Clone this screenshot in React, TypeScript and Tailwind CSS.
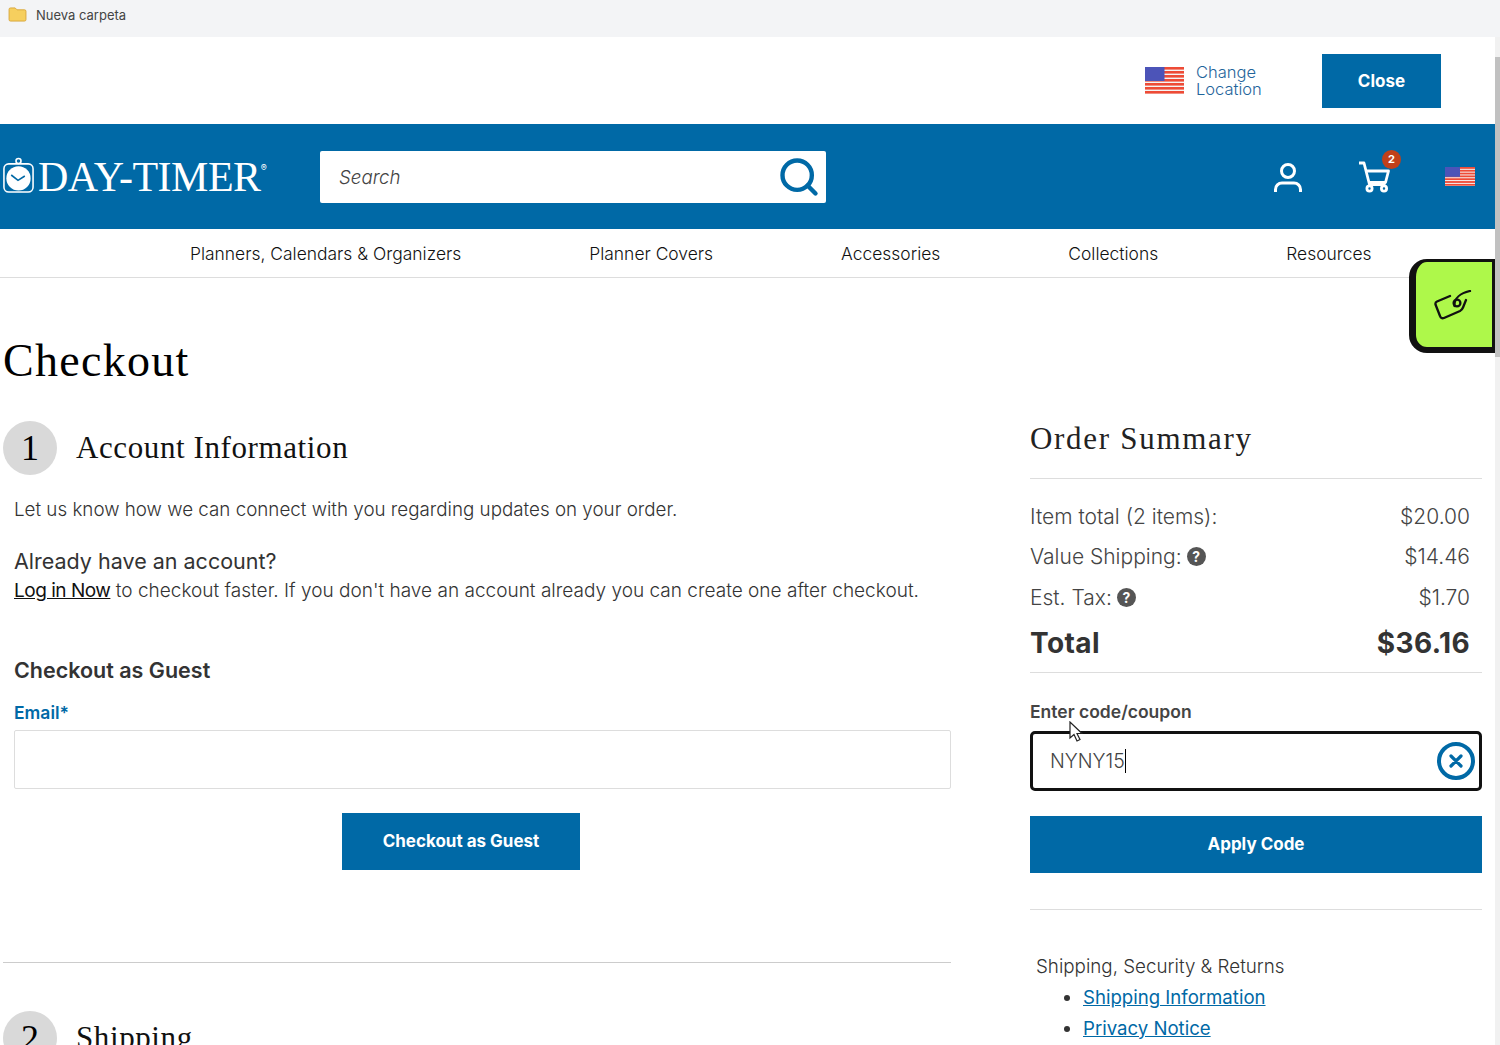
import React from 'react';
import { Search } from 'lucide-react';

const sans = 'font-["Inter",sans-serif]';
const serif = 'font-["Liberation_Serif",serif]';

const Flag = ({ className }: { className: string }) => (
  <svg viewBox="0 0 40 27" className={className} preserveAspectRatio="none">
    <rect width="40" height="27" fill="#f4f4f4" />
    {[0, 4, 8, 12, 16, 20, 24].map((y) => (
      <rect key={y} y={y} width="40" height="2.6" fill="#ee4b36" />
    ))}
    <rect width="20" height="14" fill="#4c54b8" />
  </svg>
);

const Logo = () => (
  <div className="flex items-center">
    <svg viewBox="0 0 34 38" className="w-[33px] h-[37px] ml-[2px] -mt-[2px]">
      <circle cx="17" cy="4" r="2.6" fill="none" stroke="#fff" strokeWidth="1.6" />
      <rect x="2" y="7" width="30" height="29" rx="5" fill="none" stroke="#fff" strokeWidth="1.6" />
      <circle cx="17" cy="22" r="12.5" fill="#fff" />
      <path d="M9.5 18.5 L16.5 24 L23.5 19.5" fill="none" stroke="#0069a6" strokeWidth="1.7" />
    </svg>
    <span className={`${serif} text-[42px] leading-none text-white ml-[3px] tracking-[-0.5px]`}>DAY-TIMER</span>
    <span className="text-white text-[9px] mb-[18px]">®</span>
  </div>
);

const navItems = ['Planners, Calendars & Organizers', 'Planner Covers', 'Accessories', 'Collections', 'Resources'];

const StepTitle = ({ n, title }: { n: number; title: string }) => (
  <div className="flex items-center gap-[19px]">
    <div className={`${serif} w-[54px] h-[54px] rounded-full bg-[#d9d9d9] flex items-center justify-center text-[36px] text-black`}>{n}</div>
    <h2 className={`${serif} text-[31px] tracking-[0.6px] text-[#111]`}>{title}</h2>
  </div>
);

const SummaryRow = ({ label, value, help }: { label: string; value: string; help?: boolean }) => (
  <div className="flex justify-between items-center h-[40.5px] pb-[2px] text-[21px] font-light text-[#444]">
    <span className="flex items-center gap-[5px]">
      {label}
      {help && <span className="w-[19px] h-[19px] rounded-full bg-[#555] text-white text-[14px] font-bold flex items-center justify-center">?</span>}
    </span>
    <span className="mr-[12px]">{value}</span>
  </div>
);

export default function App() {
  return (
    <div className={`${sans} relative w-[1500px] h-[1045px] overflow-hidden bg-white flex flex-col`}>
      <div className="h-[37px] bg-[#f3f4f6] flex items-start pt-[7px] pl-[8px] gap-[9px] shrink-0">
        <svg viewBox="0 0 20 16" className="w-[19px] h-[15px]">
          <path d="M1 2.5 a1.5 1.5 0 0 1 1.5-1.5 h5 l2 2 h8 a1.5 1.5 0 0 1 1.5 1.5 v9 a1.5 1.5 0 0 1-1.5 1.5 h-15 a1.5 1.5 0 0 1-1.5-1.5 z" fill="#f6cf5e" stroke="#d9a63a" />
        </svg>
        <span className="text-[13px] leading-[16px] text-[#444]">Nueva carpeta</span>
      </div>

      <div className="flex flex-1 min-h-0">
        <div className="w-[1495px] shrink-0">
          <div className="h-[87px] flex items-center justify-end pr-[54px]">
            <Flag className="w-[39px] h-[27px]" />
            <div className="ml-[12px] text-[16.5px] leading-[17px] font-light text-[#1f659b] w-[126px]">Change<br />Location</div>
            <button className="w-[119px] h-[54px] pt-[2px] bg-[#0069a6] text-white text-[17px] font-bold">Close</button>
          </div>

          <header className="h-[105px] bg-[#0069a6] flex items-center">
            <div className="w-[320px]"><Logo /></div>
            <div className="w-[506px] h-[52px] bg-white rounded-[2px] flex items-center justify-between pl-[19px] pr-[5px]">
              <span className="italic font-light text-[#444] text-[18.7px] pt-[3px]">Search</span>
              <Search className="w-[44px] h-[44px] text-[#0069a6]" strokeWidth={2.4} />
            </div>
            <div className="flex-1 flex items-center pl-[448px]">
              <svg viewBox="0 0 30 32" className="w-[30px] h-[32px] -ml-[1px]" fill="none" stroke="#fff" strokeWidth="3">
                <circle cx="15" cy="10" r="6.5" />
                <path d="M2.5 31 v-2.5 a6.5 6.5 0 0 1 6.5-6.5 h12 a6.5 6.5 0 0 1 6.5 6.5 v2.5" />
              </svg>
              <div className="relative ml-[55px]">
                <svg viewBox="0 0 32 32" className="block w-[32px] h-[32px]" fill="none" stroke="#fff" strokeWidth="2.8" strokeLinejoin="round">
                  <path d="M1 2 h5 l5.5 21.5 h16" />
                  <path d="M7.5 10 h23 l-3 11.5 h-16" />
                  <circle cx="11.5" cy="27.5" r="2.6" />
                  <circle cx="26" cy="27.5" r="2.6" />
                </svg>
                <span className="absolute -top-[11px] -right-[11px] w-[19px] h-[19px] rounded-full bg-[#c0401a] text-white text-[11px] font-bold flex items-center justify-center">2</span>
              </div>
              <Flag className="w-[30px] h-[19px] ml-[55px]" />
            </div>
          </header>

          <nav className="h-[49px] pt-[3px] border-b border-[#ddd] flex items-center pl-[190px] gap-[128px] text-[17.45px] font-light text-[#111]">
            {navItems.map((item) => <span key={item}>{item}</span>)}
          </nav>

          <main className="pl-[3px] flex gap-[79px]">
            <section className="w-[948px] shrink-0">
              <h1 className={`${serif} text-[46px] leading-[54px] tracking-[1.3px] mt-[56px] text-black`}>Checkout</h1>
              <div className="mt-[33px]"><StepTitle n={1} title="Account Information" /></div>
              <div className="pl-[11px]">
                <p className="text-[18.8px] leading-[26px] font-light text-[#333] mt-[22px]">Let us know how we can connect with you regarding updates on your order.</p>
                <p className="text-[21.5px] leading-[28px] text-[#333] mt-[24px]">Already have an account?</p>
                <p className="text-[19.05px] leading-[26px] font-light text-[#333] mt-[3px]">
                  <a className="text-[#111] font-normal tracking-[-0.5px] underline">Log in Now</a> to checkout faster. If you don't have an account already you can create one after checkout.
                </p>
                <p className="text-[21.5px] leading-[28px] font-semibold text-[#333] mt-[52px]">Checkout as Guest</p>
                <label className="block text-[17.5px] leading-[22px] font-semibold text-[#0069a6] mt-[18px]">Email*</label>
                <div className="h-[59px] border border-[#ddd] rounded-[2px] mt-[6px]" />
                <button className="block w-[238px] h-[57px] bg-[#0069a6] text-white text-[17px] font-bold ml-[328px] mt-[24px]">Checkout as Guest</button>
              </div>
              <div className="border-t border-[#ccc] mt-[92px]" />
              <div className="mt-[48px]"><StepTitle n={2} title="Shipping" /></div>
            </section>

            <aside className="w-[452px] shrink-0">
              <h2 className={`${serif} text-[31px] leading-[36px] tracking-[1.7px] text-[#222] mt-[143px]`}>Order Summary</h2>
              <div className="border-t border-[#ddd] mt-[21px] mb-[18px]" />
              <SummaryRow label="Item total (2 items):" value="$20.00" />
              <SummaryRow label="Value Shipping:" value="$14.46" help />
              <SummaryRow label="Est. Tax:" value="$1.70" help />
              <div className="flex justify-between items-center h-[50px] pb-[2px] text-[28px] tracking-[0.4px] font-bold text-[#333]">
                <span>Total</span>
                <span className="mr-[12px]">$36.16</span>
              </div>
              <div className="border-t border-[#ddd] mt-[3px]" />
              <label className="block text-[17.5px] leading-[22px] font-semibold text-[#444] mt-[28px]">Enter code/coupon</label>
              <div className="h-[60px] border-[3px] border-[#111] rounded-[5px] mt-[8px] flex items-center justify-between pl-[17px] pr-[4px]">
                <span className="text-[19.5px] font-light text-[#444] border-r border-black leading-[24px]">NYNY15</span>
                <div className="w-[38px] h-[38px] rounded-full border-[4px] border-[#0069a6] flex items-center justify-center text-[#0069a6]">
                  <svg viewBox="0 0 14 14" className="w-[14px] h-[14px]"><path d="M2 2 L12 12 M12 2 L2 12" stroke="currentColor" strokeWidth="3.2" strokeLinecap="round" /></svg>
                </div>
              </div>
              <button className="w-full h-[57px] pt-[2px] bg-[#0069a6] text-white text-[17px] font-bold mt-[25px]">Apply Code</button>
              <div className="border-t border-[#ddd] mt-[36px]" />
              <p className="text-[18.8px] leading-[26px] font-light text-[#333] mt-[44px] ml-[6px]">Shipping, Security &amp; Returns</p>
              <ul className="list-disc pl-[53px] text-[18.6px] leading-[31px] text-[#0069a6] mt-[2px] marker:text-[#333]">
                <li><a className="underline">Shipping Information</a></li>
                <li><a className="underline">Privacy Notice</a></li>
              </ul>
            </aside>
          </main>
        </div>
        <div className="w-[5px] bg-[#f1f1f1] relative shrink-0">
          <div className="absolute top-[20px] left-0 w-[5px] h-[300px] bg-[#c1c1c1]" />
        </div>
      </div>

      <div className="absolute left-[1409px] top-[259px] w-[86px] h-[94px] bg-[#aef84a] border-[3px] border-[#111] border-l-[7px] border-b-[6px] rounded-l-[18px] flex items-center justify-center">
        <svg viewBox="0 0 38 30" className="w-[38px] h-[30px] -ml-[2px]" fill="none" stroke="#111" strokeWidth="2.3" strokeLinecap="round" strokeLinejoin="round">
          <path d="M16 6 L3 11.5 Q1 12.5 1.5 14.5 L6 26 Q7 29 10 28 L26 21 Q28 20 29 17.5 L32 10" />
          <circle cx="23" cy="13" r="3.4" />
          <path d="M20.5 16 C20 8 27 3 36 1" />
        </svg>
      </div>

      <svg viewBox="0 0 16 24" className="absolute left-[1068px] top-[721px] w-[16px] h-[24px]">
        <path d="M2 1 L2 17 L6 13.5 L9 20 L12 18.5 L9 12.5 L14 12.5 Z" fill="#fff" stroke="#222" strokeWidth="1.2" />
      </svg>
    </div>
  );
}
